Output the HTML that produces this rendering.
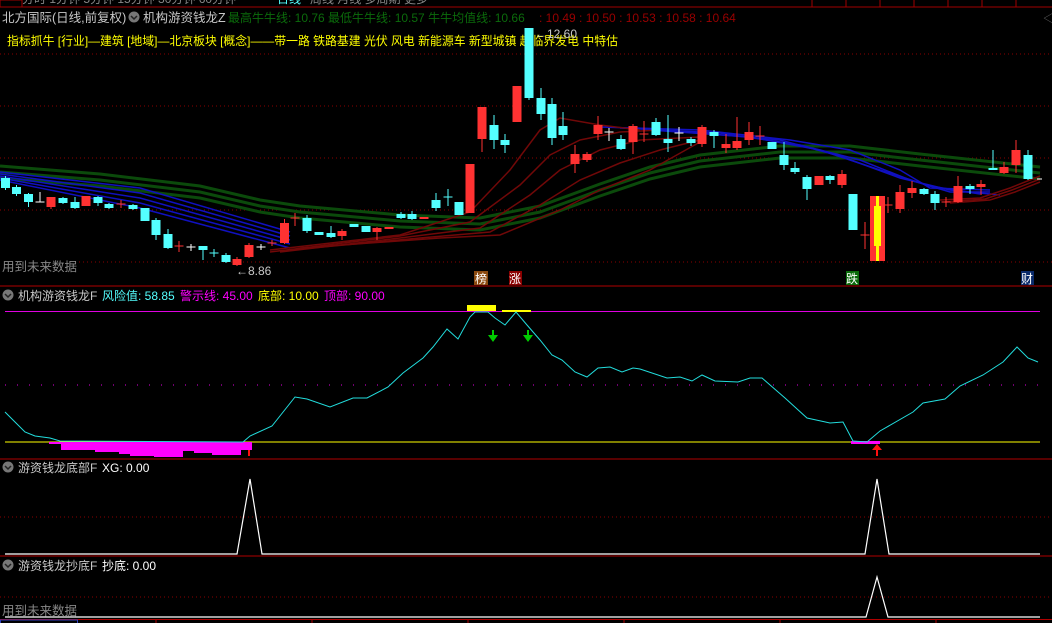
<!DOCTYPE html>
<html><head><meta charset="utf-8"><style>
html,body{margin:0;padding:0;background:#000;width:1052px;height:623px;overflow:hidden}
svg{display:block}
text{font-family:"Liberation Sans","Noto Sans CJK SC",sans-serif}
</style></head><body>
<svg width="1052" height="623" viewBox="0 0 1052 623" xmlns="http://www.w3.org/2000/svg">
<rect width="1052" height="623" fill="#000"/>
<text x="22" y="3" font-size="12" fill="#888">分时 1分钟 5分钟 15分钟 30分钟 60分钟</text>
<text x="277" y="3" font-size="12" fill="#5ff">日线</text>
<text x="310" y="3" font-size="12" fill="#888">周线 月线 多周期 更多</text>
<line x1="0" y1="7" x2="1052" y2="7" stroke="#a00000"/>
<rect x="0" y="0" width="22" height="7" fill="none" stroke="#a00000"/>
<g stroke="#a00000"><line x1="812" y1="0" x2="812" y2="7"/><line x1="846" y1="0" x2="846" y2="7"/><line x1="880" y1="0" x2="880" y2="7"/><line x1="914" y1="0" x2="914" y2="7"/><line x1="948" y1="0" x2="948" y2="7"/><line x1="982" y1="0" x2="982" y2="7"/><line x1="1016" y1="0" x2="1016" y2="7"/></g>
<text x="2" y="22" font-size="12.5" fill="#c8c8c8">北方国际(日线,前复权)</text>
<circle cx="134" cy="17" r="5.5" fill="#777"/><path d="M131 16 l3 3 l3 -3" stroke="#222" stroke-width="1.5" fill="none"/>
<text x="143" y="22" font-size="12.5" fill="#c8c8c8">机构游资钱龙Z</text>
<text x="228" y="22" font-size="12" fill="#0b6b0b">最高牛牛线: 10.76  最低牛牛线: 10.57  牛牛均值线: 10.66</text>
<text x="539" y="22" font-size="12" fill="#9a0000">: 10.49 : 10.50 : 10.53 : 10.58 : 10.64</text>
<text x="1043" y="22" font-size="11" fill="#666">◁</text>
<text x="7" y="45" font-size="12" fill="#ffff00" textLength="611" lengthAdjust="spacingAndGlyphs">指标抓牛 [行业]—建筑 [地域]—北京板块 [概念]——带一路 铁路基建 光伏 风电 新能源车 新型城镇 超临界发电 中特估</text>
<g stroke="#8a0000" stroke-dasharray="1 3">
<line x1="0" y1="54" x2="1052" y2="54"/><line x1="0" y1="106" x2="1052" y2="106"/><line x1="0" y1="158" x2="1052" y2="158"/><line x1="0" y1="210" x2="1052" y2="210"/><line x1="75" y1="262" x2="1052" y2="262"/>
<line x1="0" y1="517" x2="1052" y2="517"/><line x1="0" y1="597" x2="1052" y2="597"/>
</g>
<g fill="none" stroke="#0b4a0b" stroke-width="3">
<polyline points="0,166 100,174 200,186 260,200 300,206 400,215 480,218 540,206 600,184 650,167 700,155 780,146 850,146 920,154 1040,167"/>
<polyline points="0,172 100,180 200,192 260,206 300,212 400,221 480,224 540,212 600,190 650,173 700,161 780,152 850,152 920,160 1040,173"/>
<polyline points="0,178 100,186 200,198 260,212 300,218 400,227 480,230 540,218 600,196 650,179 700,167 780,158 850,158 920,166 1040,179"/>
</g>
<g fill="none" stroke="#1010c0" stroke-width="1.5">
<polyline points="0,172 140,188 290,232"/><polyline points="0,174 140,193 290,236"/><polyline points="0,176 140,198 290,240"/><polyline points="0,178 140,203 290,244"/><polyline points="0,180 140,208 290,248"/>
<polyline points="600,127 700,130 790,140 850,150 900,170 930,188 990,190"/>
<polyline points="620,128 720,133 800,145 860,160 910,180 950,192 990,192"/>
<polyline points="650,130 750,137 820,150 880,170 930,186 980,194"/>
<polyline points="700,133 780,140 840,156 900,178 950,190 1000,195"/>
</g>
<g fill="none" stroke="#700808" stroke-width="1.5">
<polyline points="270,250 400,235 470,212 510,170 540,130 560,118 600,125 640,130"/>
<polyline points="270,252 400,236 470,222 520,185 550,155 580,140 620,132 660,130"/>
<polyline points="280,252 400,238 480,228 530,195 560,170 600,150 640,140 700,137"/>
<polyline points="290,250 420,238 490,232 540,205 580,180 620,163 660,150 700,140"/>
<polyline points="300,248 440,238 500,235 560,210 600,190 650,170 700,142"/>
<polyline points="940,200 980,198 1010,188 1040,176"/><polyline points="945,202 985,199 1012,190 1040,179"/><polyline points="950,203 990,200 1015,192 1040,182"/>
</g>
<g fill="#54ffff" stroke="#54ffff">
<path d="M5.5 176V190M16.5 185V196M28.5 193V207M63 197V204M75 197V209M98 196V206M109 203V209M133 204V210M156 218V240M168 229V249M203 246V260M226 253V263M307 215V233M331 226V238M401 212V219M412 211V220M436 193V211M494 115V149M505 134V153M529 28V100M541 88V120M552 98V145M563 112V140M621 135V150M656 118V136M668 115V152M691 137V146M714 130V148M784 142V170M795 162V174M807 175V200M830 175V184M924 188V195M935 191V210M970 184V194M993 150V170M1028 150V180M214 249V257M209.5 253H218.5M448 189V206M443.5 197H452.5"/>
</g>
<g fill="#54ffff">
<rect x="1" y="178" width="9" height="10"/><rect x="12" y="187" width="9" height="7"/><rect x="24" y="194" width="9" height="8"/><rect x="58.5" y="198" width="9" height="5"/><rect x="70.5" y="202" width="9" height="6"/><rect x="93.5" y="197" width="9" height="6"/><rect x="104.5" y="204" width="9" height="4"/><rect x="128.5" y="205" width="9" height="4"/><rect x="140.5" y="208" width="9" height="13"/><rect x="151.5" y="220" width="9" height="15"/><rect x="163.5" y="234" width="9" height="14"/><rect x="198.5" y="246" width="9" height="4"/><rect x="221.5" y="255" width="9" height="7"/>
<rect x="302.5" y="218" width="9" height="13"/><rect x="314.5" y="232" width="9" height="3"/><rect x="326.5" y="233" width="9" height="4"/><rect x="349.5" y="224" width="9" height="3"/><rect x="361.5" y="226" width="9" height="6"/><rect x="396.5" y="214" width="9" height="4"/><rect x="407.5" y="214" width="9" height="5"/><rect x="431.5" y="200" width="9" height="8"/><rect x="454.5" y="202" width="9" height="13"/>
<rect x="489.5" y="125" width="9" height="15"/><rect x="500.5" y="140" width="9" height="5"/><rect x="524.5" y="28" width="9" height="70"/><rect x="536.5" y="98" width="9" height="16"/><rect x="547.5" y="104" width="9" height="34"/><rect x="558.5" y="126" width="9" height="9"/><rect x="616.5" y="139" width="9" height="10"/><rect x="651.5" y="122" width="9" height="13"/><rect x="663.5" y="139" width="9" height="4"/><rect x="686.5" y="139" width="9" height="4"/><rect x="709.5" y="132" width="9" height="4"/><rect x="767.5" y="142" width="9" height="7"/><rect x="779.5" y="155" width="9" height="10"/><rect x="790.5" y="168" width="9" height="4"/><rect x="802.5" y="177" width="9" height="12"/><rect x="825.5" y="176" width="9" height="4"/><rect x="848.5" y="194" width="9" height="36"/><rect x="919.5" y="189" width="9" height="5"/><rect x="930.5" y="194" width="9" height="9"/><rect x="965.5" y="186" width="9" height="3"/><rect x="988.5" y="168" width="9" height="2"/><rect x="1023.5" y="155" width="9" height="24"/>
</g>
<g stroke="#ff3232" fill="none">
<path d="M51 197V209M249 243V258M284.5 219V244M342 229V240M377 227V240M482 107V152M575 145V173M587 152V162M598 116V140M633 124V154M702 125V147M726 134V153M737 117V150M749 122V145M842 170V188M900 185V213M912 181V198M958 176V203M981 180V195M1004 162V174M1016 140V173M237 257V266"/>
<path d="M121 200V208M116.5 204H125.5M179 241V252M174.5 246H183.5M272 240V246M267.5 243H276.5M295 213V226M290.5 218H299.5M644 121V142M639.5 134H648.5M760 126V145M755.5 136H764.5M865 222V249M860.5 235H869.5M888 197V213M883.5 205H892.5M946 197V207M941.5 202H950.5"/>
</g>
<g fill="#ff3232">
<rect x="46.5" y="197" width="9" height="10"/><rect x="81.5" y="196" width="9" height="10"/><rect x="232.5" y="259" width="9" height="6"/><rect x="244.5" y="245" width="9" height="12"/><rect x="280" y="223" width="9" height="20"/><rect x="337.5" y="231" width="9" height="5"/><rect x="372.5" y="228" width="9" height="4"/><rect x="384.5" y="227" width="9" height="2"/><rect x="419.5" y="217" width="9" height="2"/><rect x="465.5" y="164" width="9" height="49"/><rect x="477.5" y="107" width="9" height="32"/><rect x="512.5" y="86" width="9" height="36"/>
<rect x="570.5" y="154" width="9" height="10"/><rect x="582.5" y="154" width="9" height="6"/><rect x="593.5" y="125" width="9" height="9"/><rect x="628.5" y="126" width="9" height="16"/><rect x="697.5" y="127" width="9" height="17"/><rect x="721.5" y="144" width="9" height="4"/><rect x="732.5" y="141" width="9" height="7"/><rect x="744.5" y="132" width="9" height="8"/><rect x="814.5" y="176" width="9" height="9"/><rect x="837.5" y="174" width="9" height="11"/><rect x="895.5" y="192" width="9" height="17"/><rect x="907.5" y="188" width="9" height="5"/><rect x="953.5" y="186" width="9" height="16"/><rect x="976.5" y="184" width="9" height="3"/><rect x="999.5" y="167" width="9" height="6"/><rect x="1011.5" y="150" width="9" height="15"/>
<rect x="870" y="196" width="15" height="65"/>
</g>
<rect x="874" y="206" width="7" height="40" fill="#ffff00"/><rect x="876" y="196" width="3" height="65" fill="#ffff00"/>
<g stroke="#fff"><path d="M40 192V202M35.5 202H44.5M191 244V251M186.5 247H195.5M261 244V250M256.5 247H265.5M609 128V141M604.5 132H613.5M679 127V141M674.5 133H683.5M1037 179H1042"/></g>
<text x="236" y="275" font-size="12" fill="#c8c8c8">←8.86</text>
<text x="535" y="38" font-size="12" fill="#c8c8c8">←12.60</text>
<text x="2" y="271" font-size="12.5" fill="#888">用到未来数据</text>
<rect x="474" y="271" width="14" height="14" fill="#8b4a10"/><text x="475" y="283" font-size="12" fill="#fff">榜</text>
<rect x="509" y="271" width="13" height="14" fill="#8b0000"/><text x="509" y="283" font-size="12" fill="#fff">涨</text>
<rect x="846" y="271" width="13" height="14" fill="#0a6a0a"/><text x="846" y="283" font-size="12" fill="#fff">跌</text>
<rect x="1021" y="271" width="13" height="14" fill="#0a2a6a"/><text x="1021" y="283" font-size="12" fill="#fff">财</text>
<line x1="0" y1="286" x2="1052" y2="286" stroke="#b00000"/>
<circle cx="8" cy="295" r="5.5" fill="#777"/><path d="M5 294 l3 3 l3 -3" stroke="#222" stroke-width="1.5" fill="none"/>
<text x="18" y="300" font-size="12" fill="#c8c8c8">机构游资钱龙F</text>
<text x="102" y="300" font-size="12" fill="#54ffff">风险值: 58.85</text>
<text x="180" y="300" font-size="12" fill="#ff00ff">警示线: 45.00</text>
<text x="258" y="300" font-size="12" fill="#ffff00">底部: 10.00</text>
<text x="324" y="300" font-size="12" fill="#ff00ff">顶部: 90.00</text>
<line x1="5" y1="311.5" x2="1040" y2="311.5" stroke="#e000e0"/>
<line x1="5" y1="385" x2="1040" y2="385" stroke="#e000e0" stroke-dasharray="1 11"/>
<line x1="5" y1="442" x2="1040" y2="442" stroke="#ffff00"/>
<rect x="467" y="305" width="29" height="6" fill="#ffff00"/><rect x="502" y="310" width="29" height="2" fill="#ffff00"/>
<path d="M49 442H252V450H241V455H212V453H194V451H183V457H154V456H130V454H119V452H95V450H61V444H49Z" fill="#ff00ff"/>
<rect x="851" y="441" width="29" height="3" fill="#ff00ff"/>
<polyline fill="none" stroke="#22dddd" stroke-width="1" points="5,412 15,422 25,432 35,436 50,438 60,441 243,442 250,436 272,426 295,397 307,399 330,407 353,398 367,398 388,387 403,373 423,358 433,347 447,329 458,339 470,317 475,312 488,312 495,318 505,325 516,312 527,325 540,340 552,355 562,360 575,372 587,377 598,368 610,367 622,372 633,368 640,369 667,378 680,377 692,381 702,375 715,381 738,382 750,378 762,378 785,398 807,418 830,423 843,422 853,441 867,442 880,431 913,412 923,403 945,399 960,386 983,375 1003,362 1017,347 1028,358 1038,362"/>
<g fill="#00cc00"><rect x="492" y="330" width="2" height="6"/><path d="M488 335H498L493 342Z"/><rect x="527" y="330" width="2" height="6"/><path d="M523 335H533L528 342Z"/></g>
<g fill="#ff1010"><rect x="248" y="450" width="2" height="6"/><rect x="876" y="449" width="2" height="7"/><path d="M872 450H882L877 444Z"/></g>
<line x1="0" y1="459" x2="1052" y2="459" stroke="#b00000"/>
<circle cx="8" cy="467" r="5.5" fill="#777"/><path d="M5 466 l3 3 l3 -3" stroke="#222" stroke-width="1.5" fill="none"/>
<text x="18" y="472" font-size="12" fill="#c8c8c8">游资钱龙底部F</text>
<text x="102" y="472" font-size="12" fill="#fff">XG: 0.00</text>
<polyline fill="none" stroke="#fff" stroke-width="1.2" points="5,554 237,554 250,479 262,554 865,554 877,479 889,554 1040,554"/>
<line x1="0" y1="556" x2="1052" y2="556" stroke="#b00000"/>
<circle cx="8" cy="565" r="5.5" fill="#777"/><path d="M5 564 l3 3 l3 -3" stroke="#222" stroke-width="1.5" fill="none"/>
<text x="18" y="570" font-size="12" fill="#c8c8c8">游资钱龙抄底F</text>
<text x="102" y="570" font-size="12" fill="#fff">抄底: 0.00</text>
<text x="2" y="615" font-size="12.5" fill="#888">用到未来数据</text>
<polyline fill="none" stroke="#fff" stroke-width="1.2" points="5,617 866,617 877,577 888,617 1040,617"/>
<line x1="0" y1="619.5" x2="1052" y2="619.5" stroke="#b00000"/>
<rect x="0.5" y="620" width="77" height="4" fill="#000" stroke="#3040c0"/>
<g stroke="#b00000"><line x1="156" y1="620" x2="156" y2="623"/><line x1="312" y1="620" x2="312" y2="623"/><line x1="468" y1="620" x2="468" y2="623"/><line x1="624" y1="620" x2="624" y2="623"/><line x1="780" y1="620" x2="780" y2="623"/><line x1="936" y1="620" x2="936" y2="623"/></g>
</svg>
</body></html>
